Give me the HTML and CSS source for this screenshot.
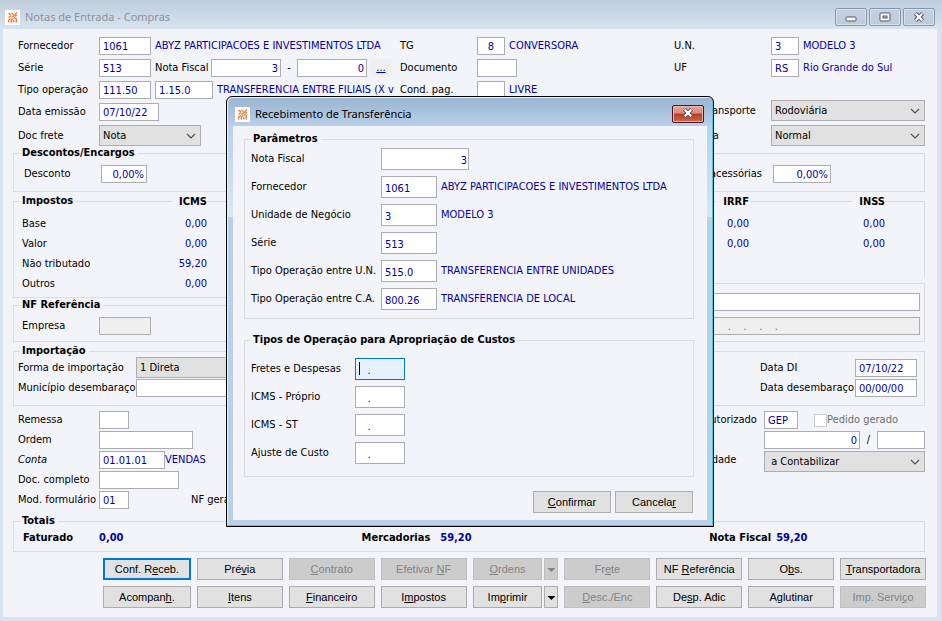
FILE: index.html
```
<!DOCTYPE html>
<html lang="pt-BR">
<head>
    <meta charset="UTF-8">
    <meta name="viewport" content="width=device-width, initial-scale=1.0">
    <title>Notas de Entrada - Compras</title>
    <link rel="stylesheet" href="styles.css">
</head>
<body>
    <svg class="defs" width="0" height="0" aria-hidden="true">
        <symbol id="logo" viewBox="0 0 15 15">
            <rect width="15" height="15" fill="#fff"/>
            <g fill="none" stroke="#f47a3e" stroke-width="1.4">
                <path d="M3.500 3l2.500 2M6.500 3l2 1.500M12 2.500L8.500 6M3.500 7.500L6 5.500M6.500 7.500l2-1.500M10 6.500l2-1.500"/>
                <path d="M3.700 12.500V10l2-1.500M6.300 12.500V10l2-1.500M8.800 12.500V10M11.300 12.500V9L9 7.500"/>
            </g>
        </symbol>
        <symbol id="cross" viewBox="0 0 12 10">
            <path d="M2.500 1.500l7 7M9.500 1.500l-7 7" stroke="#535666" stroke-width="4.200"/>
            <path d="M2.800 1.800l6.400 6.400M9.200 1.800l-6.400 6.400" stroke="#fff" stroke-width="2.200"/>
        </symbol>
    </svg>

    <div class="window">
        <header class="titlebar">
            <svg class="logo"><use href="#logo"/></svg>
            <h1>Notas de Entrada - Compras</h1>
            <div class="win-buttons">
                <button type="button" aria-label="Minimizar"><svg width="12" height="6" viewBox="0 0 12 6"><rect x="1" y="1" width="10" height="4" rx="1" fill="#fff" stroke="#535666"/></svg></button>
                <button type="button" aria-label="Maximizar"><svg width="12" height="10" viewBox="0 0 12 10"><rect x="1" y="1" width="10" height="8" rx="1" fill="#fff" stroke="#535666"/><rect x="4" y="4" width="4" height="2" fill="#c3d0de" stroke="#535666"/></svg></button>
                <button type="button" aria-label="Fechar"><svg width="12" height="10"><use href="#cross"/></svg></button>
            </div>
        </header>

        <form class="main">
            <div class="header-grid">
                <div class="rows">
                    <div class="row"><label class="lbl" for="fornecedor">Fornecedor</label><input class="w52" id="fornecedor" value="1061"><span class="desc">ABYZ PARTICIPACOES E INVESTIMENTOS LTDA</span></div>
                    <div class="row">
                        <label class="lbl" for="serie">Série</label><input class="w52" id="serie" value="513">
                        <label class="inline" for="nota">Nota Fiscal</label><input class="w70 num" id="nota" value="3">
                        <span class="dash">-</span><input class="w70 num" aria-label="Subsérie" value="0">
                        <a class="more" href="#">...</a>
                    </div>
                    <div class="row"><label class="lbl" for="tipo">Tipo operação</label><input class="w52" id="tipo" value="111.50"><input class="w58 next" aria-label="Complemento da operação" value="1.15.0"><span class="desc">TRANSFERENCIA ENTRE FILIAIS (X v</span></div>
                    <div class="row"><label class="lbl" for="emissao">Data emissão</label><input class="w60" id="emissao" value="07/10/22"></div>
                    <div class="row tall"><label class="lbl" for="frete">Doc frete</label><select class="w102" id="frete"><option>Nota</option></select></div>
                </div>
                <div class="rows mid">
                    <div class="row"><label class="lbl" for="tg">TG</label><input class="w28 center" id="tg" value="8"><span class="desc">CONVERSORA</span></div>
                    <div class="row"><label class="lbl" for="doc">Documento</label><input class="w40" id="doc"></div>
                    <div class="row"><label class="lbl" for="pag">Cond. pag.</label><input class="w28" id="pag"><span class="desc">LIVRE</span></div>
                </div>
                <div class="rows right">
                    <div class="row"><label class="lbl" for="un">U.N.</label><input class="w28" id="un" value="3"><span class="desc">MODELO 3</span></div>
                    <div class="row"><label class="lbl" for="uf">UF</label><input class="w28" id="uf" value="RS"><span class="desc">Rio Grande do Sul</span></div>
                    <div class="row tall after-gap"><label class="lbl" for="via">Modo transporte</label><select class="grow" id="via"><option>Rodoviária</option></select></div>
                    <div class="row tall"><label class="lbl" for="natureza">Natureza</label><select class="grow" id="natureza"><option>Normal</option></select></div>
                </div>
            </div>

            <fieldset class="discounts">
                <legend>Descontos/Encargos</legend>
                <div class="row">
                    <label class="lbl" for="desconto">Desconto</label><input class="w46 num" id="desconto" value="0,00%">
                    <div class="row accessory"><label for="acess">Despesas acessórias</label><input class="w58 num" id="acess" value="0,00%"></div>
                </div>
            </fieldset>

            <div class="halves">
                <div class="half">
                    <fieldset class="taxes open-right">
                        <legend>Impostos</legend>
                        <table>
                            <thead><tr><td></td><th><span>ICMS</span></th></tr></thead>
                            <tbody>
                                <tr><th>Base</th><td>0,00</td></tr>
                                <tr><th>Valor</th><td>0,00</td></tr>
                                <tr><th>Não tributado</th><td>59,20</td></tr>
                                <tr><th>Outros</th><td>0,00</td></tr>
                            </tbody>
                        </table>
                    </fieldset>
                    <fieldset class="nf-ref open-right">
                        <legend>NF Referência</legend>
                        <div class="row"><label class="lbl" for="empresa">Empresa</label><input class="w52" id="empresa" disabled></div>
                    </fieldset>
                </div>
                <div class="half">
                    <div class="withheld">
                        <table>
                            <thead><tr><th><span>IRRF</span></th><th><span>INSS</span></th></tr></thead>
                            <tbody>
                                <tr><td>0,00</td><td>0,00</td></tr>
                                <tr><td>0,00</td><td>0,00</td></tr>
                            </tbody>
                        </table>
                    </div>
                    <div class="key-box">
                        <input aria-label="Chave da nota" value="">
                        <input aria-label="Conta da nota" value="     .    .    .    ." disabled>
                    </div>
                </div>
            </div>

            <fieldset class="import">
                <legend>Importação</legend>
                <div class="import-cols">
                    <div class="import-left">
                        <div class="row tall"><label class="lbl" for="forma">Forma de importação</label><select class="w140" id="forma"><option>1 Direta</option></select></div>
                        <div class="row"><label class="lbl" for="municipio">Município desembaraço</label><input class="w140" id="municipio"></div>
                    </div>
                    <div class="import-right">
                        <div class="row"><label class="lbl" for="di">Data DI</label><input class="w62" id="di" value="07/10/22"></div>
                        <div class="row"><label class="lbl" for="desemb">Data desembaraço</label><input class="w62" id="desemb" value="00/00/00"></div>
                    </div>
                </div>
            </fieldset>

            <div class="details">
                <div class="rows tight">
                    <div class="row"><label class="lbl" for="remessa">Remessa</label><input class="w30" id="remessa"></div>
                    <div class="row"><label class="lbl" for="ordem">Ordem</label><input class="w94" id="ordem"></div>
                    <div class="row"><label class="lbl" for="conta"><i>Conta</i></label><input class="w66" id="conta" value="01.01.01"><span class="account">VENDAS</span></div>
                    <div class="row"><label class="lbl" for="completo">Doc. completo</label><input class="w80" id="completo"></div>
                    <div class="row"><label class="lbl" for="modelo">Mod. formulário</label><input class="w30" id="modelo" value="01"><span class="generated">NF gerada</span></div>
                </div>
                <div class="rows tight right">
                    <div class="row"><label class="lbl" for="autor">Pedido autorizado</label><input class="w34" id="autor" value="GEP"><label class="check"><input type="checkbox" disabled>Pedido gerado</label></div>
                    <div class="row"><span class="lbl"></span><input class="grow num" aria-label="Número do pedido" value="0"><span class="slash">/</span><input class="w48" aria-label="Ano do pedido"></div>
                    <div class="row"><label class="lbl" for="contab">Contabilidade</label><select class="grow" id="contab"><option>&nbsp;a Contabilizar</option></select></div>
                </div>
            </div>

            <fieldset class="totals">
                <legend>Totais</legend>
                <dl>
                    <div><dt class="first">Faturado</dt><dd>0,00</dd></div>
                    <div><dt>Mercadorias</dt><dd>59,20</dd></div>
                    <div><dt class="near">Nota Fiscal</dt><dd>59,20</dd></div>
                </dl>
            </fieldset>

            <div class="actions">
                <button type="button" class="default">Conf. R<u>e</u>ceb.</button>
                <button type="button">Pré<u>v</u>ia</button>
                <button type="button" disabled><u>C</u>ontrato</button>
                <button type="button" disabled>Efetivar <u>N</u>F</button>
                <div class="split"><button type="button" disabled><u>O</u>rdens</button><button type="button" disabled aria-label="Mais opções de ordens"><i class="arrow"></i></button></div>
                <button type="button" disabled>Fr<u>e</u>te</button>
                <button type="button">NF <u>R</u>eferência</button>
                <button type="button">O<u>b</u>s.</button>
                <button type="button"><u>T</u>ransportadora</button>
                <button type="button">Acompan<u>h</u>.</button>
                <button type="button"><u>I</u>tens</button>
                <button type="button"><u>F</u>inanceiro</button>
                <button type="button">I<u>m</u>postos</button>
                <div class="split"><button type="button">Im<u>p</u>rimir</button><button type="button" aria-label="Mais opções de impressão"><i class="arrow"></i></button></div>
                <button type="button" disabled><u>D</u>esc./Enc</button>
                <button type="button">De<u>s</u>p. Adic</button>
                <button type="button">A<u>g</u>lutinar</button>
                <button type="button" disabled>Imp. Servi<u>ç</u>o</button>
            </div>
        </form>
    </div>

    <div class="overlay">
        <div class="dialog" role="dialog" aria-labelledby="dialogTitle">
            <header class="dialog-title">
                <svg class="logo"><use href="#logo"/></svg>
                <h2 id="dialogTitle">Recebimento de Transferência</h2>
                <button type="button" class="close" aria-label="Fechar"><svg width="12" height="10"><use href="#cross"/></svg></button>
            </header>
            <form class="dialog-body">
                <fieldset>
                    <legend>Parâmetros</legend>
                    <div class="row"><label class="lbl" for="pNota">Nota Fiscal</label><input class="w88 num" id="pNota" value="3"></div>
                    <div class="row"><label class="lbl" for="pForn">Fornecedor</label><input class="w56" id="pForn" value="1061"><span class="desc">ABYZ PARTICIPACOES E INVESTIMENTOS LTDA</span></div>
                    <div class="row"><label class="lbl" for="pUn">Unidade de Negócio</label><input class="w56" id="pUn" value="3"><span class="desc">MODELO 3</span></div>
                    <div class="row"><label class="lbl" for="pSerie">Série</label><input class="w56" id="pSerie" value="513"></div>
                    <div class="row"><label class="lbl" for="pTun">Tipo Operação entre U.N.</label><input class="w56" id="pTun" value="515.0"><span class="desc">TRANSFERENCIA ENTRE UNIDADES</span></div>
                    <div class="row"><label class="lbl" for="pTca">Tipo Operação entre C.A.</label><input class="w56" id="pTca" value="800.26"><span class="desc">TRANSFERENCIA DE LOCAL</span></div>
                </fieldset>
                <fieldset class="costs">
                    <legend>Tipos de Operação para Apropriação de Custos</legend>
                    <div class="row"><label class="lbl" for="cFrete">Fretes e Despesas</label><input class="w50 active" id="cFrete" value="   ."></div>
                    <div class="row"><label class="lbl" for="cIcms">ICMS - Próprio</label><input class="w50" id="cIcms" value="   ."></div>
                    <div class="row"><label class="lbl" for="cSt">ICMS - ST</label><input class="w50" id="cSt" value="   ."></div>
                    <div class="row"><label class="lbl" for="cAjuste">Ajuste de Custo</label><input class="w50" id="cAjuste" value="   ."></div>
                </fieldset>
                <div class="dialog-actions">
                    <button type="button"><u>C</u>onfirmar</button>
                    <button type="button">Cancela<u>r</u></button>
                </div>
            </form>
        </div>
    </div>
</body>
</html>
```
FILE: styles.css
```
* {
    box-sizing: border-box;
}

body {
    margin: 0;
    min-height: 100vh;
    position: relative;
    background-color: #d7e4f0;
    color: #000;
    font-family: "DejaVu Sans Condensed", "DejaVu Sans", sans-serif;
    font-size: 11px;
    line-height: 18px;
    white-space: nowrap;
}

.defs {
    position: absolute;
}

.window {
    padding: 0 5px 4px 3px;
}

/* title bars */
.titlebar {
    display: flex;
    align-items: center;
    height: 29px;
    margin: 0 -5px 0 -3px;
    padding: 5px 7px 0 5px;
    background: linear-gradient(#bfcddb, #d7e4f0);
}

.logo {
    width: 15px;
    height: 15px;
    margin-right: 5px;
}

h1,
h2 {
    flex: 1;
    margin: 0;
    font-family: "Noto Sans", "Open Sans", sans-serif;
    font-size: 11px;
    font-weight: normal;
}

h1 {
    color: #8c9298;
}

.win-buttons {
    display: flex;
    gap: 2px;
}

.win-buttons button {
    width: 32px;
    height: 18px;
    border: 1px solid #8497ad;
    border-radius: 2px;
    background: linear-gradient(#c4d1df, #bccbdb);
    box-shadow: inset 0 0 0 1px #d6e1ec;
}

/* fields */
.main {
    padding: 8px 12px 9px 10px;
    background-color: #f2f4fa;
}

.row {
    display: flex;
    align-items: center;
    height: 18px;
}

.row.tall {
    height: 21px;
}

.lbl {
    flex: none;
}

input,
select,
button {
    margin: 0;
    font: inherit;
}

input {
    height: 18px;
    padding: 2px 3px 0;
    border: 1px solid #abadb3;
    background-color: #fff;
    color: #0000a0;
}

input:disabled {
    background-color: #efefef;
    color: #6d6d6d;
}

select {
    height: 21px;
    padding: 0 3px;
    border: 1px solid #adadad;
    border-radius: 0;
    appearance: none;
    background: #e1e1e1 url("data:image/svg+xml,%3Csvg xmlns='http://www.w3.org/2000/svg' width='10' height='6'%3E%3Cpath d='M1 1l4 4 4-4' fill='none' stroke='%23505050' stroke-width='1.2'/%3E%3C/svg%3E") no-repeat right 4px center;
    color: #000;
}

.num {
    padding-right: 2px;
    text-align: right;
}

.center {
    text-align: center;
}

.grow {
    flex: 1;
    min-width: 0;
}

.w28 { width: 28px; }
.w30 { width: 30px; }
.w34 { width: 34px; }
.w40 { width: 40px; }
.w46 { width: 46px; }
.w48 { width: 48px; }
.w50 { width: 50px; }
.w52 { width: 52px; }
.w56 { width: 56px; }
.w58 { width: 58px; }
.w60 { width: 60px; }
.w62 { width: 62px; }
.w66 { width: 66px; }
.w70 { width: 70px; }
.w80 { width: 80px; }
.w88 { width: 88px; }
.w94 { width: 94px; }
.w102 { width: 102px; }
.w140 { width: 140px; }

.desc {
    margin-left: 4px;
    color: #0000a0;
}

.header-grid {
    display: grid;
    grid-template-columns: 382fr 274fr 251fr;
    margin-left: 5px;
}

.rows {
    display: flex;
    flex-direction: column;
    gap: 4px;
    min-width: 0;
}

.rows .lbl {
    width: 81px;
}

.mid .lbl {
    width: 77px;
}

.right .lbl {
    width: 97px;
}

.after-gap {
    margin-top: 19px;
}

.inline {
    width: 60px;
    padding-left: 4px;
}

.dash {
    width: 16px;
    text-align: center;
}

.next {
    margin-left: 4px;
}

.more {
    width: 22px;
    margin-left: 3px;
    background-color: #f0f0f0;
    color: #0000a0;
    text-align: center;
}

/* group boxes */
fieldset {
    min-width: 0;
    margin: 0;
    padding: 0 7px;
    border: 1px solid #dcdcdc;
}

legend {
    margin-left: -1px;
    padding: 0 3px 0 2px;
    font-weight: bold;
    line-height: 14px;
}

.discounts {
    padding: 5px 10px 8px;
}

.discounts legend {
    margin-left: -4px;
}

.discounts .lbl {
    width: 77px;
}

.accessory {
    margin: 0 83px 0 auto;
    gap: 11px;
}

.halves {
    display: grid;
    grid-template-columns: 1fr 1fr;
    margin-top: 2px;
}

.open-right {
    border-right: none;
}

table {
    border-collapse: collapse;
}

td,
tbody th {
    height: 20px;
    padding: 0;
}

td {
    color: #0000a0;
    text-align: right;
}

tbody th {
    font-weight: normal;
    text-align: left;
}

thead th,
thead td {
    height: 20px;
    padding: 0 0 4px;
    line-height: 16px;
    text-align: right;
}

thead span {
    padding-left: 7px;
    background-color: #f2f4fa;
}

.taxes {
    padding-bottom: 3px;
}

.taxes table {
    width: 185px;
    margin-top: -14px;
    margin-left: 1px;
}

.nf-ref {
    padding-bottom: 6px;
}

.nf-ref .row {
    margin-top: 5px;
}

.nf-ref .lbl {
    width: 78px;
    padding-left: 1px;
}

.withheld {
    height: 76px;
    margin-top: 7px;
    padding-right: 39px;
    border: 1px solid #dcdcdc;
    border-width: 1px 1px 0 0;
}

.withheld table {
    width: 272px;
    margin: -8px 0 0 auto;
}

.withheld th {
    width: 50%;
}

.key-box {
    display: flex;
    flex-direction: column;
    align-items: flex-end;
    gap: 6px;
    margin-top: 6px;
    padding: 9px 4px 6px;
    border: 1px solid #dcdcdc;
    border-left: none;
}

.key-box input {
    width: 212px;
    white-space: pre;
}

.import {
    margin-top: 2px;
    padding: 0 7px 8px 4px;
}

.import legend {
    margin-left: 2px;
}

.import-cols {
    display: flex;
    justify-content: space-between;
    margin-top: -1px;
}

.import-left {
    display: flex;
    flex-direction: column;
    gap: 1px;
}

.import-left .lbl {
    width: 118px;
}

.import-right {
    display: flex;
    flex-direction: column;
    gap: 2px;
    padding-top: 2px;
}

.import-right .lbl {
    width: 95px;
}

.details {
    display: flex;
    justify-content: space-between;
    margin: 5px 0 5px 5px;
}

.tight {
    gap: 2px;
}

.details .right {
    width: 257px;
}

.details .right .lbl {
    width: 96px;
}

.details .right .row {
    align-items: flex-start;
}

.account {
    color: #0000a0;
}

.generated {
    margin-left: 62px;
}

.check {
    display: flex;
    align-items: center;
    margin-left: 16px;
    color: #6d6d6d;
}

.check input {
    width: 13px;
    height: 13px;
    appearance: none;
    padding: 0;
    border-color: #ccc;
    background-color: #fff;
}

.slash {
    width: 17px;
    text-align: center;
}

.totals dl {
    display: grid;
    grid-template-columns: 339fr 348fr 208fr;
    margin: 0;
    padding: 1px 0 4px 2px;
    font-weight: bold;
}

.totals dl div {
    display: flex;
}

.totals dt {
    margin-right: 10px;
}

.totals dt.first {
    width: 66px;
}

.totals dt.near {
    margin-right: 5px;
}

.totals dd {
    margin: 0;
    color: #0000a0;
}

/* command buttons */
.actions {
    display: grid;
    grid-template-columns: 88fr repeat(8, 86fr);
    gap: 6px;
    margin: 6px -1px 0 90px;
}

.actions button,
.dialog-actions button {
    height: 22px;
    padding: 0;
    border: 1px solid #adadad;
    background-color: #e1e1e1;
    color: #000;
    font-family: "Liberation Sans", Arial, sans-serif;
    font-size: 11px;
}

.actions button.default {
    border: 2px solid #0078d7;
}

.actions button:disabled {
    border-color: #bfbfbf;
    background-color: #ccc;
    color: #838383;
}

.split {
    display: grid;
    grid-template-columns: 1fr 14px;
    gap: 2px;
}

.arrow {
    display: block;
    margin: 2px auto 0;
    width: 8px;
    height: 4px;
    background-color: currentColor;
    clip-path: polygon(0 0, 100% 0, 50% 100%);
}

/* transfer dialog */
.overlay {
    position: absolute;
    inset: 2px 2px 0 0;
    display: grid;
    place-items: center;
}

.dialog {
    width: 488px;
    padding: 0 6px 6px;
    border: 1px solid #000;
    border-radius: 6px 6px 0 0;
    background: linear-gradient(#99b4d1, #b9d1ea 30px, #d9e7f5 120px, #b9d1ea 120px);
    box-shadow: inset -1px -1px #2fd5ea, inset 1px 1px #e6f0fa;
}

.dialog-title {
    display: flex;
    align-items: center;
    height: 29px;
    padding: 5px 3px 0 2px;
}

.close {
    width: 32px;
    height: 18px;
    padding: 0;
    border: 1px solid #4b1620;
    border-radius: 2px;
    background: linear-gradient(#e5a79c, #d98a7b 45%, #b93a25 50%, #cf6a50);
    box-shadow: inset 0 0 0 1px #eab5aa;
}

.dialog-body {
    padding: 6px 13px 7px 11px;
    background-color: #f2f4fa;
}

.dialog .row {
    height: 22px;
    margin-bottom: 6px;
}

.dialog input {
    height: 22px;
    padding: 2px 3px 0;
}

.dialog .num {
    padding-right: 1px;
}

.dialog .lbl {
    width: 130px;
    margin-left: -1px;
}

.dialog fieldset {
    padding: 2px 7px;
}

.dialog .costs {
    margin-top: 14px;
    padding-top: 11px;
    padding-bottom: 6px;
}

.dialog .costs .lbl {
    width: 104px;
}

.dialog .costs input {
    padding-left: 2px;
}

.dialog .active {
    border-color: #0078d7;
    background: linear-gradient(#000, #000) no-repeat 3px 3px / 1px 13px #e5f1ff;
}

.dialog-actions {
    display: flex;
    justify-content: flex-end;
    gap: 4px;
    margin: 14px 1px 0 0;
}

.dialog-actions button {
    width: 78px;
}
```
